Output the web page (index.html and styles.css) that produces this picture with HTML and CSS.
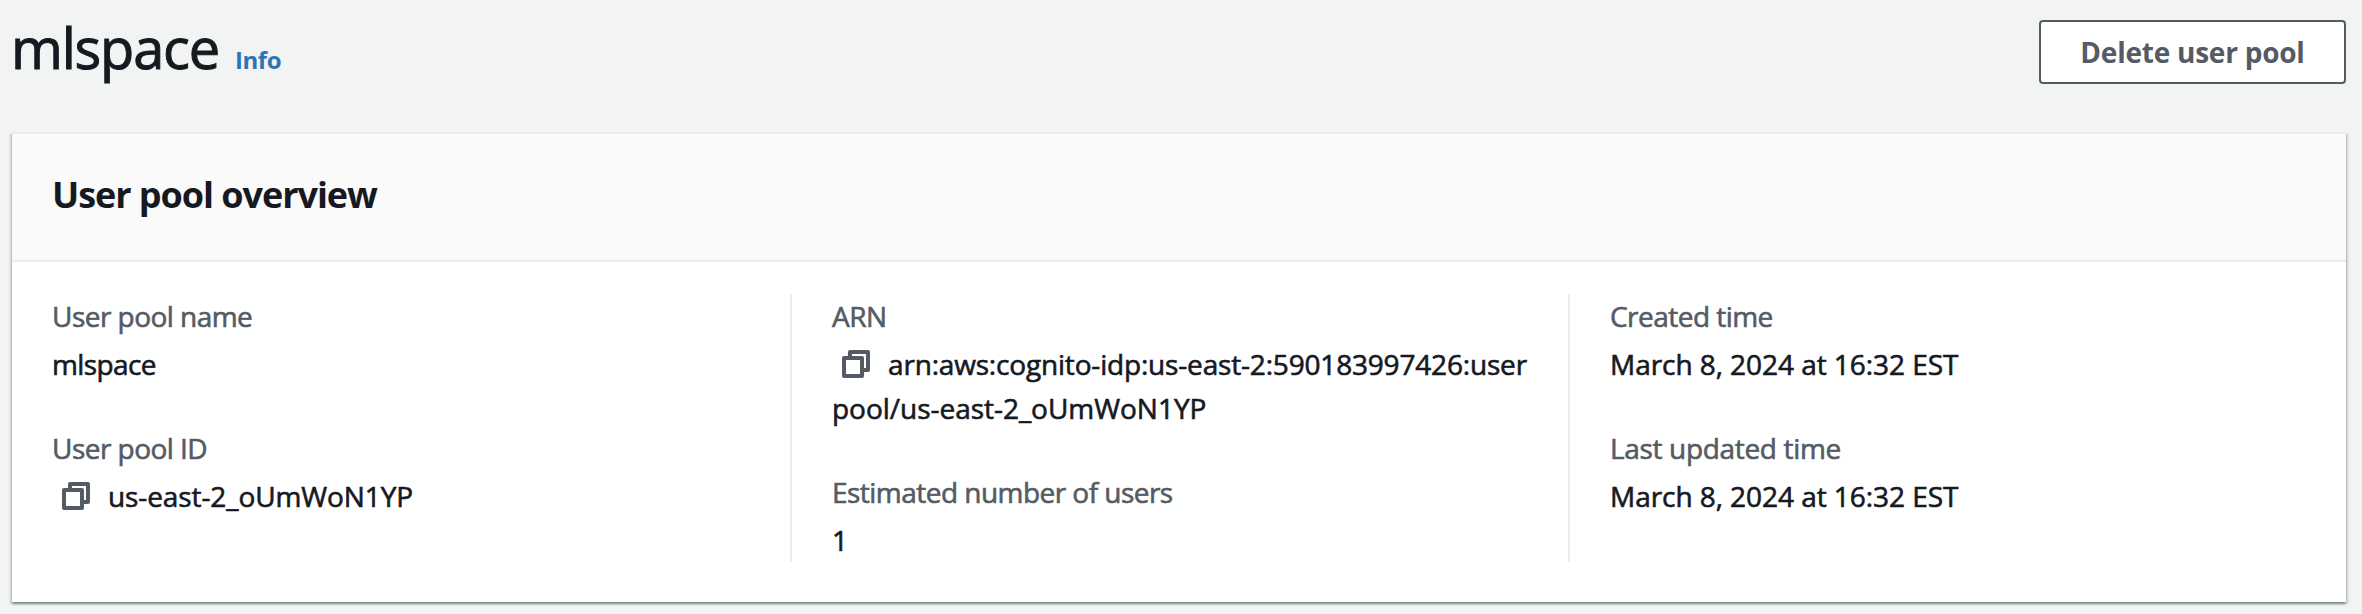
FILE: index.html
```html
<!DOCTYPE html>
<html lang="en">
<head>
<meta charset="utf-8">
<title>mlspace</title>
<link rel="stylesheet" href="styles.css">
</head>
<body>
<header class="page-header">
  <div class="heading">
    <h1 class="title">mlspace</h1>
    <a class="info">Info</a>
  </div>
  <button class="button" type="button">Delete user pool</button>
</header>
<section class="card">
  <div class="card-header"><h2 class="card-title">User pool overview</h2></div>
  <div class="columns">
    <div class="column">
      <div class="field">
        <div class="label">User pool name</div>
        <div class="value value-name">mlspace</div>
      </div>
      <div class="field">
        <div class="label">User pool ID</div>
        <div class="value value-id"><svg class="copy" viewBox="0 0 16 16"><path d="M5 5V2h9v9h-2"/><path d="M2 5h9v9H2z"/></svg>us-east-2_oUmWoN1YP</div>
      </div>
    </div>
    <div class="column">
      <div class="field">
        <div class="label">ARN</div>
        <div class="value value-arn"><svg class="copy" viewBox="0 0 16 16"><path d="M5 5V2h9v9h-2"/><path d="M2 5h9v9H2z"/></svg>arn:aws:cognito-idp:us-east-2:590183997426:user<br><span class="arn-tail">pool/us-east-2_oUmWoN1YP</span></div>
      </div>
      <div class="field">
        <div class="label">Estimated number of users</div>
        <div class="value">1</div>
      </div>
    </div>
    <div class="column">
      <div class="field">
        <div class="label">Created time</div>
        <div class="value">March 8, 2024 at 16:32 EST</div>
      </div>
      <div class="field">
        <div class="label label-updated">Last updated time</div>
        <div class="value">March 8, 2024 at 16:32 EST</div>
      </div>
    </div>
  </div>
</section>
</body>
</html>
```
FILE: styles.css
```css
* {
  box-sizing: border-box;
}

body {
  margin: 0;
  padding: 20px 16px 12px 12px;
  background: #f2f4f3;
  color: #16191f;
  font: 28px/44px "Open Sans", "Noto Sans", sans-serif;
}

.page-header {
  display: flex;
  align-items: flex-start;
  justify-content: space-between;
  height: 112px;
}

.heading {
  display: flex;
  align-items: baseline;
}

.title {
  margin: 0 0 0 -1px;
  font-size: 56px;
  font-weight: 400;
  line-height: 54px;
  letter-spacing: -1.2px;
  -webkit-text-stroke: 1px;
}

.info {
  margin-left: 16px;
  color: #2e73b8;
  font-size: 24px;
  font-weight: 700;
  letter-spacing: -0.4px;
}

.button {
  width: 307px;
  height: 64px;
  padding: 0;
  border: 2px solid #545b64;
  border-radius: 4px;
  background: #fff;
  color: #545b64;
  font: inherit;
  font-weight: 700;
  letter-spacing: -0.24px;
}

.card {
  border-top: 2px solid #eaeded;
  background: #fff;
  box-shadow:
    0 2px 2px 0 rgba(0, 28, 36, 0.3),
    2px 2px 2px 0 rgba(0, 28, 36, 0.15),
    -2px 2px 2px 0 rgba(0, 28, 36, 0.15);
}

.card-header {
  padding: 39px 40px 43px;
  border-bottom: 2px solid #eaeded;
  background: #fafafa;
}

.card-title {
  margin: 0;
  font-size: 36px;
  font-weight: 700;
  line-height: 44px;
  letter-spacing: -1.05px;
}

.columns {
  display: grid;
  grid-template-columns: 778px 778px 1fr;
  padding: 32px 0 40px;
}

.column {
  display: flex;
  flex-direction: column;
  gap: 40px;
  padding-left: 40px;
}

.column + .column {
  border-left: 2px solid #eaeded;
}

.label {
  margin-bottom: 4px;
  color: #545b64;
  letter-spacing: -0.53px;
  -webkit-text-stroke: 0.6px;
}

.label-updated {
  letter-spacing: -0.33px;
}

.value {
  letter-spacing: -0.05px;
  white-space: nowrap;
  -webkit-text-stroke: 0.6px;
}

.value-name {
  letter-spacing: -0.6px;
}

.value-id {
  letter-spacing: -0.1px;
}

.value-arn {
  letter-spacing: -0.18px;
}

.arn-tail {
  letter-spacing: -0.03px;
}

.copy {
  width: 32px;
  height: 32px;
  margin: 0 16px 0 8px;
  vertical-align: -5px;
  fill: none;
  stroke: #545b64;
  stroke-width: 2;
  stroke-linejoin: round;
}
```
